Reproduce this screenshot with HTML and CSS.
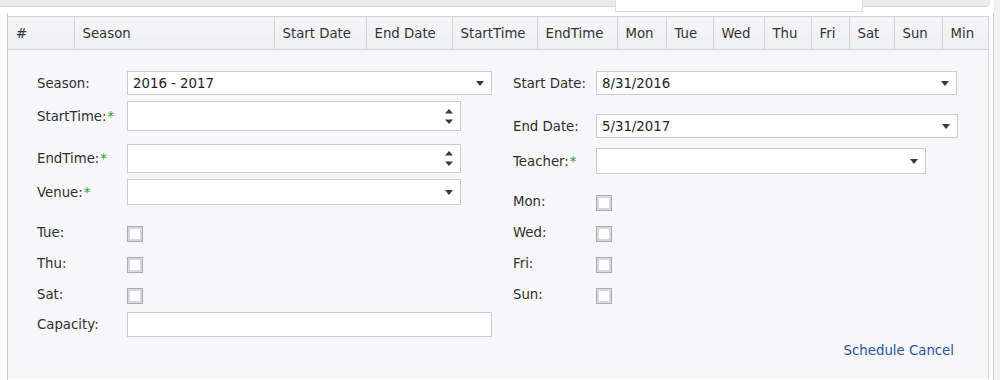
FILE: index.html
```html
<!DOCTYPE html>
<html lang="en">
<head>
    <meta charset="UTF-8">
    <title>Class Schedule</title>
    <link rel="stylesheet" href="styles.css">
</head>
<body>

    <div class="top-strip">
        <div class="popup-edge"></div>
    </div>

    <div class="grid-frame">
        <table class="grid">
            <colgroup>
                <col style="width:66px"><col style="width:200px"><col style="width:92px"><col style="width:86px">
                <col style="width:85px"><col style="width:80px"><col style="width:49px"><col style="width:47px">
                <col style="width:51px"><col style="width:47px"><col style="width:38px"><col style="width:45px">
                <col style="width:48px"><col style="width:46px">
            </colgroup>
            <thead>
                <tr>
                    <th>#</th>
                    <th>Season</th>
                    <th>Start Date</th>
                    <th>End Date</th>
                    <th>StartTime</th>
                    <th>EndTime</th>
                    <th>Mon</th>
                    <th>Tue</th>
                    <th>Wed</th>
                    <th>Thu</th>
                    <th>Fri</th>
                    <th>Sat</th>
                    <th>Sun</th>
                    <th>Min</th>
                </tr>
            </thead>
            <tbody>
                <tr class="edit-row">
                    <td colspan="14">
                        <div class="edit-form">
                            <!-- colonna sinistra -->
                            <div class="form-col">
                                <div class="field">
                                    <label>Season:</label>
                                    <div class="combo w-365 h-24">
                                        <span>2016 - 2017</span>
                                        <svg class="drop" width="8" height="5" viewBox="0 0 8 5"><path d="M0 0h8L4 5z"/></svg>
                                    </div>
                                </div>
                                <div class="field mt-6">
                                    <label>StartTime:<span class="req">*</span></label>
                                    <div class="combo w-334 h-30">
                                        <span></span>
                                        <svg class="spin" width="8" height="15" viewBox="0 0 8 15"><path d="M4 0L8 4.5H0z M0 10.5h8L4 15z"/></svg>
                                    </div>
                                </div>
                                <div class="field mt-13">
                                    <label>EndTime:<span class="req">*</span></label>
                                    <div class="combo w-334 h-29">
                                        <span></span>
                                        <svg class="spin" width="8" height="15" viewBox="0 0 8 15"><path d="M4 0L8 4.5H0z M0 10.5h8L4 15z"/></svg>
                                    </div>
                                </div>
                                <div class="field mt-6">
                                    <label>Venue:<span class="req">*</span></label>
                                    <div class="combo w-334 h-26">
                                        <span></span>
                                        <svg class="drop" width="8" height="5" viewBox="0 0 8 5"><path d="M0 0h8L4 5z"/></svg>
                                    </div>
                                </div>
                                <div class="field check-row mt-12">
                                    <label>Tue:</label>
                                    <span class="checkbox"></span>
                                </div>
                                <div class="field check-row">
                                    <label>Thu:</label>
                                    <span class="checkbox"></span>
                                </div>
                                <div class="field check-row">
                                    <label>Sat:</label>
                                    <span class="checkbox"></span>
                                </div>
                                <div class="field mt-2">
                                    <label>Capacity:</label>
                                    <div class="combo w-365 h-25"></div>
                                </div>
                            </div>

                            <!-- colonna destra -->
                            <div class="form-col right">
                                <div class="field">
                                    <label>Start Date:</label>
                                    <div class="combo w-361 h-24">
                                        <span>8/31/2016</span>
                                        <svg class="drop" width="8" height="5" viewBox="0 0 8 5"><path d="M0 0h8L4 5z"/></svg>
                                    </div>
                                </div>
                                <div class="field mt-19">
                                    <label>End Date:</label>
                                    <div class="combo w-362 h-24">
                                        <span>5/31/2017</span>
                                        <svg class="drop" width="8" height="5" viewBox="0 0 8 5"><path d="M0 0h8L4 5z"/></svg>
                                    </div>
                                </div>
                                <div class="field mt-10">
                                    <label>Teacher:<span class="req">*</span></label>
                                    <div class="combo w-330 h-26">
                                        <span></span>
                                        <svg class="drop" width="8" height="5" viewBox="0 0 8 5"><path d="M0 0h8L4 5z"/></svg>
                                    </div>
                                </div>
                                <div class="field check-row mt-12">
                                    <label>Mon:</label>
                                    <span class="checkbox"></span>
                                </div>
                                <div class="field check-row">
                                    <label>Wed:</label>
                                    <span class="checkbox"></span>
                                </div>
                                <div class="field check-row">
                                    <label>Fri:</label>
                                    <span class="checkbox"></span>
                                </div>
                                <div class="field check-row">
                                    <label>Sun:</label>
                                    <span class="checkbox"></span>
                                </div>
                                <div class="form-actions">
                                    <a href="#">Schedule</a> <a href="#">Cancel</a>
                                </div>
                            </div>
                        </div>
                    </td>
                </tr>
            </tbody>
        </table>
    </div>

</body>
</html>
```

FILE: styles.css
```css
/* Stili base */
body {
    font-family: "DejaVu Sans", Verdana, sans-serif;
    font-size: 13.3px;
    color: #2e2e2e;
    margin: 0;
    background: linear-gradient(to right, #fff 994px, #f2f2f3 994px);
    overflow: hidden;
}

/* Barra in alto (tagliata) */
.top-strip {
    position: relative;
    width: 990px;
    height: 6px;
    background-color: #ebebec;
    border-bottom: 1px solid #d2d2d4;
    border-bottom-right-radius: 5px;
}
.popup-edge {
    position: absolute;
    left: 615px;
    top: 0;
    width: 246px;
    height: 11px;
    background-color: #fff;
    border: 1px solid #dcdcdf;
    border-top: none;
}

/* Cornice della griglia */
.grid-frame {
    margin: 6px 0 0 7px;
    width: 980px;
    height: 364px;
    padding: 3px 5px 0 0;
    border-left: 1px solid #c9cacd;
    border-right: 1px solid #c9cacd;
    overflow: hidden;
}

table.grid {
    width: 980px;
    table-layout: fixed;
    border-collapse: collapse;
}
.grid th {
    height: 32px;
    padding: 0 0 0 8px;
    text-align: left;
    font-weight: normal;
    color: #333;
    background: linear-gradient(#f6f6f8, #eeeff2);
    border: 1px solid #d1d3d7;
    white-space: nowrap;
    overflow: hidden;
}
.grid th:first-child {
    border-left: none;
}

/* Riga di modifica */
.edit-row td {
    padding: 0;
    background-color: #f7f7f9;
    border-right: 1px solid #d1d3d7;
    vertical-align: top;
    height: 329px;
}
.edit-form {
    display: grid;
    grid-template-columns: 455px 445px;
    column-gap: 21px;
    padding: 21px 0 0 29px;
}
.form-col {
    display: flex;
    flex-direction: column;
}

.field {
    display: flex;
    align-items: center;
}
.field label {
    width: 90px;
    flex-shrink: 0;
    white-space: nowrap;
}
.form-col.right .field label {
    width: 83px;
}
.req {
    color: #2e9a2e;
    margin-left: 1px;
}

/* Campi combo / input */
.combo {
    box-sizing: border-box;
    display: flex;
    align-items: center;
    justify-content: space-between;
    padding: 0 7px 0 5px;
    background-color: #fff;
    border: 1px solid #c9cbd0;
    color: #1e1e1e;
}
.combo svg {
    fill: #3a3a3a;
    flex-shrink: 0;
}
.w-365 { width: 365px; }
.w-362 { width: 362px; }
.w-361 { width: 361px; }
.w-334 { width: 334px; }
.w-330 { width: 330px; }
.h-24 { height: 24px; }
.h-25 { height: 25px; }
.h-26 { height: 26px; }
.h-29 { height: 29px; }
.h-30 { height: 30px; }

.mt-2 { margin-top: 2px; }
.mt-6 { margin-top: 6px; }
.mt-10 { margin-top: 10px; }
.mt-12 { margin-top: 12px; }
.mt-13 { margin-top: 13px; }
.mt-19 { margin-top: 19px; }

/* Checkbox */
.check-row {
    height: 31px;
}
.checkbox {
    box-sizing: border-box;
    width: 16px;
    height: 16px;
    margin-top: 2px;
    background-color: #fff;
    border: 1px solid #a9adb3;
    box-shadow: inset 0 0 0 2px #d6d8dc;
}

/* Link azioni */
.form-actions {
    margin-top: 33px;
    align-self: flex-end;
    margin-right: 4px;
    line-height: 16px;
}
.form-actions a {
    color: #2b54a4;
    text-decoration: none;
}
```
